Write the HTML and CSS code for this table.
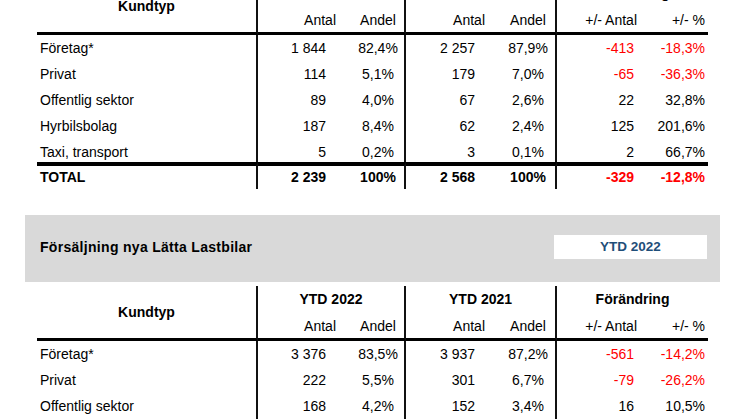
FILE: index.html
```html
<!DOCTYPE html>
<html lang="sv">
<head>
<meta charset="utf-8">
<title>Försäljning per kundtyp</title>
<link rel="stylesheet" href="styles.css">
</head>
<body>
<main class="page">
  <table class="kt kt-first">
    <colgroup>
      <col class="c-label"><col class="c-antal1"><col class="c-andel1"><col class="c-antal2"><col class="c-andel2"><col class="c-dantal"><col class="c-dpct">
    </colgroup>
    <thead>
      <tr class="grp">
        <th rowspan="2" class="kund sep">Kundtyp</th>
        <th colspan="2" class="sep">Mars 2022</th>
        <th colspan="2" class="sep">Mars 2021</th>
        <th colspan="2">Förändring</th>
      </tr>
      <tr class="sub">
        <th class="num">Antal</th><th class="pct sep">Andel</th>
        <th class="num">Antal</th><th class="pct sep">Andel</th>
        <th class="dnum">+/- Antal</th><th class="dpct">+/- %</th>
      </tr>
    </thead>
    <tbody>
      <tr><td class="lbl sep">Företag*</td><td class="num">1 844</td><td class="pct sep">82,4%</td><td class="num">2 257</td><td class="pct sep">87,9%</td><td class="dnum neg">-413</td><td class="dpct neg">-18,3%</td></tr>
      <tr><td class="lbl sep">Privat</td><td class="num">114</td><td class="pct sep">5,1%</td><td class="num">179</td><td class="pct sep">7,0%</td><td class="dnum neg">-65</td><td class="dpct neg">-36,3%</td></tr>
      <tr><td class="lbl sep">Offentlig sektor</td><td class="num">89</td><td class="pct sep">4,0%</td><td class="num">67</td><td class="pct sep">2,6%</td><td class="dnum">22</td><td class="dpct">32,8%</td></tr>
      <tr><td class="lbl sep">Hyrbilsbolag</td><td class="num">187</td><td class="pct sep">8,4%</td><td class="num">62</td><td class="pct sep">2,4%</td><td class="dnum">125</td><td class="dpct">201,6%</td></tr>
      <tr class="last"><td class="lbl sep">Taxi, transport</td><td class="num">5</td><td class="pct sep">0,2%</td><td class="num">3</td><td class="pct sep">0,1%</td><td class="dnum">2</td><td class="dpct">66,7%</td></tr>
    </tbody>
    <tfoot>
      <tr class="total"><td class="lbl sep">TOTAL</td><td class="num">2 239</td><td class="pct sep">100%</td><td class="num">2 568</td><td class="pct sep">100%</td><td class="dnum neg">-329</td><td class="dpct neg">-12,8%</td></tr>
    </tfoot>
  </table>

  <section class="band">
    <h2 class="band-title">Försäljning nya Lätta Lastbilar</h2>
    <div class="period">YTD 2022</div>
  </section>

  <table class="kt">
    <colgroup>
      <col class="c-label"><col class="c-antal1"><col class="c-andel1"><col class="c-antal2"><col class="c-andel2"><col class="c-dantal"><col class="c-dpct">
    </colgroup>
    <thead>
      <tr class="grp">
        <th rowspan="2" class="kund sep">Kundtyp</th>
        <th colspan="2" class="sep">YTD 2022</th>
        <th colspan="2" class="sep">YTD 2021</th>
        <th colspan="2">Förändring</th>
      </tr>
      <tr class="sub">
        <th class="num">Antal</th><th class="pct sep">Andel</th>
        <th class="num">Antal</th><th class="pct sep">Andel</th>
        <th class="dnum">+/- Antal</th><th class="dpct">+/- %</th>
      </tr>
    </thead>
    <tbody>
      <tr><td class="lbl sep">Företag*</td><td class="num">3 376</td><td class="pct sep">83,5%</td><td class="num">3 937</td><td class="pct sep">87,2%</td><td class="dnum neg">-561</td><td class="dpct neg">-14,2%</td></tr>
      <tr><td class="lbl sep">Privat</td><td class="num">222</td><td class="pct sep">5,5%</td><td class="num">301</td><td class="pct sep">6,7%</td><td class="dnum neg">-79</td><td class="dpct neg">-26,2%</td></tr>
      <tr><td class="lbl sep">Offentlig sektor</td><td class="num">168</td><td class="pct sep">4,2%</td><td class="num">152</td><td class="pct sep">3,4%</td><td class="dnum">16</td><td class="dpct">10,5%</td></tr>
    </tbody>
  </table>
</main>
</body>
</html>
```

FILE: styles.css
```css
* {
  box-sizing: border-box;
}

html, body {
  margin: 0;
  padding: 0;
  background: #ffffff;
}

body {
  font-family: "Liberation Sans", Arial, sans-serif;
  font-size: 14px;
  color: #000000;
  overflow: hidden;
}

.page {
  width: 746px;
}

.kt {
  border-collapse: separate;
  border-spacing: 0;
  table-layout: fixed;
  width: 671px;
  margin-left: 37px;
  line-height: 16px;
}

.kt-first {
  margin-top: -20px;
}

.c-label { width: 221px; }
.c-antal1 { width: 94px; }
.c-andel1 { width: 54px; }
.c-antal2 { width: 95px; }
.c-andel2 { width: 56px; }
.c-dantal { width: 83px; }
.c-dpct { width: 68px; }

.kt th,
.kt td {
  padding: 5px 0 5px 0;
  white-space: nowrap;
  vertical-align: top;
}

.kt th {
  font-weight: bold;
  text-align: center;
}

.grp th {
  padding-bottom: 6px;
}

.sub th {
  font-weight: normal;
  padding-bottom: 4px;
  border-bottom: 3px solid #000;
}

.kt th.kund {
  vertical-align: middle;
  border-bottom: 3px solid #000;
  padding: 0;
}

.sep {
  border-right: 2px solid #111;
}

.lbl {
  text-align: left;
  padding-left: 3px !important;
}

.kt .num {
  text-align: right;
  padding-right: 26px;
}

.kt .sub .num {
  padding-right: 16px;
}

.kt .pct {
  text-align: center;
}

.kt .dnum {
  text-align: right;
  padding-right: 6px;
}

.kt .sub .dnum {
  padding-right: 3px;
}

.kt .dpct {
  text-align: right;
  padding-right: 3px;
}

.last td {
  padding-bottom: 2px;
}

.total td {
  font-weight: bold;
  border-top: 4px solid #000;
  padding-top: 3px;
  padding-bottom: 4px;
}

.neg {
  color: #ff0000;
}

.band {
  display: flex;
  align-items: center;
  justify-content: space-between;
  width: 695px;
  height: 67px;
  margin: 26px 0 4px 25px;
  padding: 0 13px 4px 15px;
  background: #d9d9d9;
}

.band-title {
  margin: 0;
  font-size: 14px;
  font-weight: bold;
  letter-spacing: 0.3px;
  line-height: 16px;
}

.period {
  width: 153px;
  height: 24px;
  background: #ffffff;
  color: #1f4e79;
  font-size: 13.5px;
  font-weight: bold;
  line-height: 24px;
  text-align: center;
}
```
